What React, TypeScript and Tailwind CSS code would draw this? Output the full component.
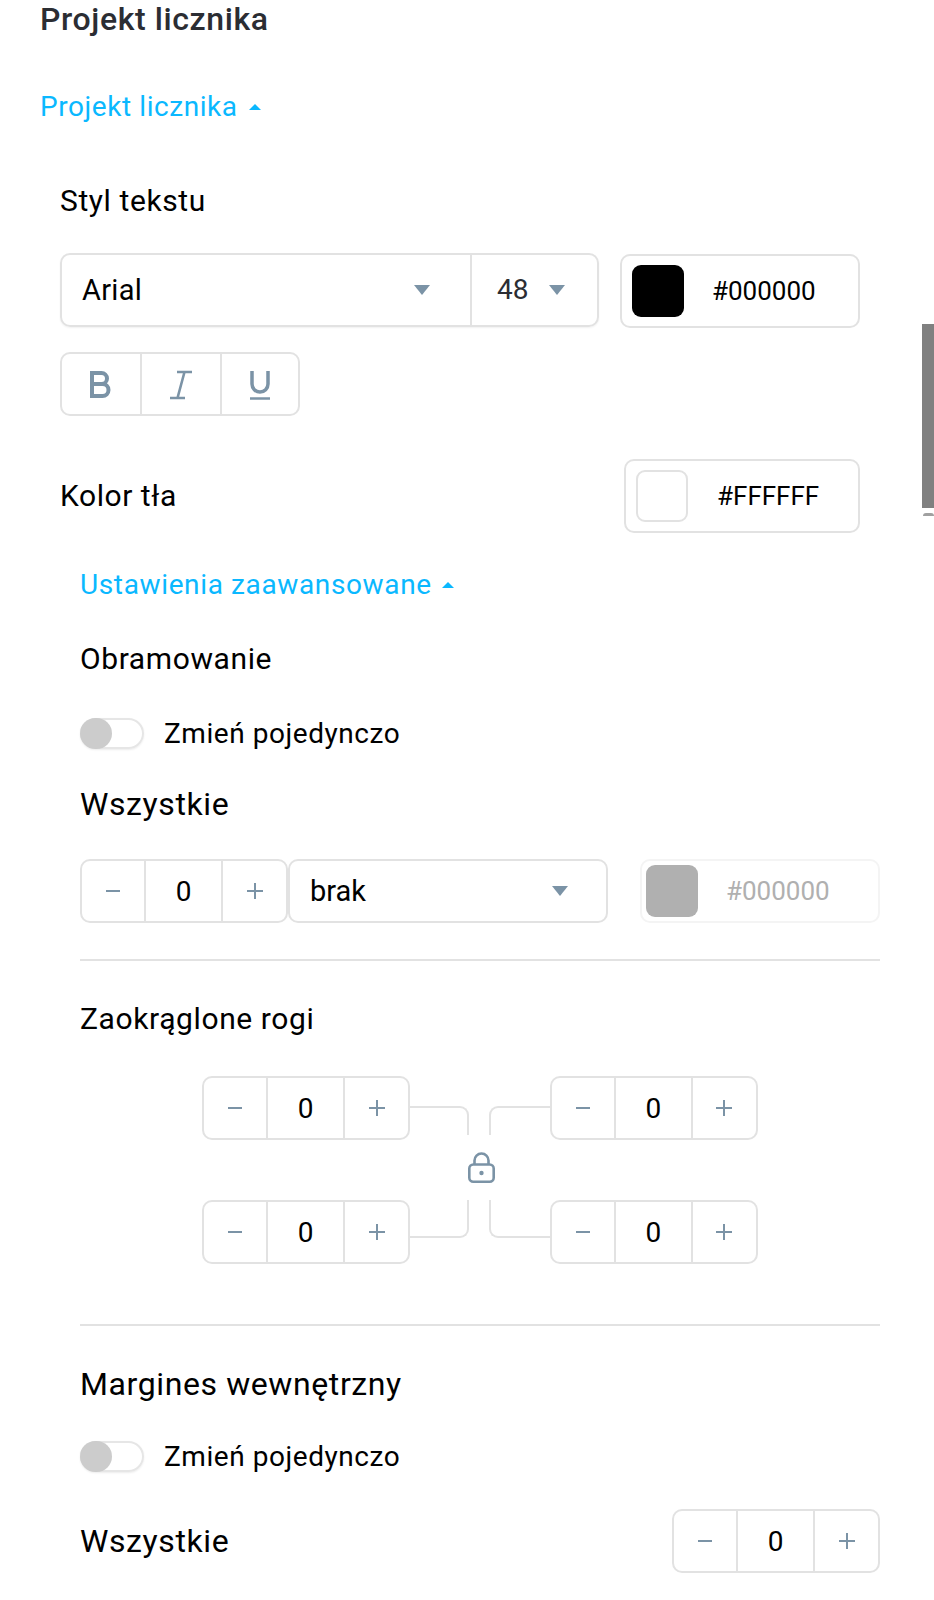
const BORDER = 'border-2 border-[#e2e2e2]';

function Caret({ blue = false }: { blue?: boolean }) {
  if (blue) {
    return (
      <svg width="12" height="6" viewBox="0 0 12 6" className="shrink-0">
        <polygon points="6,0 12,6 0,6" fill="#0ab8ff" />
      </svg>
    );
  }
  return (
    <svg width="16" height="10" viewBox="0 0 16 10" className="shrink-0">
      <polygon points="0,0 16,0 8,10" fill="#7b93a6" />
    </svg>
  );
}

function Stepper() {
  return (
    <div className={`w-[208px] h-[64px] ${BORDER} rounded-[10px] flex items-center shrink-0`}>
      <div className="w-[62px] h-full flex items-center justify-center">
        <svg width="14" height="2" viewBox="0 0 14 2">
          <rect width="14" height="2" fill="#7b93a6" />
        </svg>
      </div>
      <div className="w-[79px] h-full pt-[2px] border-x-2 border-[#e2e2e2] flex items-center justify-center text-[28px] text-black">0</div>
      <div className="flex-1 h-full flex items-center justify-center">
        <svg width="16" height="16" viewBox="0 0 16 16">
          <path d="M0 8h16M8 0v16" stroke="#7b93a6" strokeWidth="2" />
        </svg>
      </div>
    </div>
  );
}

function ColorBox({ hex, swatch, width, gap }: { hex: string; swatch: string; width: string; gap: string }) {
  return (
    <div className={`${width} h-[74px] ${BORDER} rounded-[10px] flex items-center pl-[10px] shrink-0`}>
      <div className={`w-[52px] h-[52px] rounded-[9px] shrink-0 ${swatch}`}></div>
      <span className={`${gap} text-[26px] text-black`}>{hex}</span>
    </div>
  );
}

function Toggle() {
  return (
    <div className="flex items-center h-[31px]">
      <div className="w-[64px] h-[31px] border-2 border-[#e6e6e6] rounded-full shadow-[0_1px_2px_rgba(0,0,0,0.08)]">
        <div className="w-[32px] h-[31px] -mt-[2px] -ml-[2px] rounded-full bg-[#cccccc]"></div>
      </div>
      <span className="ml-[20px] text-[28px] tracking-[0.55px] text-black">Zmień pojedynczo</span>
    </div>
  );
}

function Heading({ children, className = '' }: { children: string; className?: string }) {
  return <div className={`h-[38px] flex items-center tracking-[0.6px] text-black ${className}`}>{children}</div>;
}

export default function App() {
  return (
    <div className="relative w-[934px] h-[1600px] overflow-hidden bg-white font-['Roboto',sans-serif]">
      {/* Scrollbar */}
      <div className="absolute right-0 top-[324px] w-[12px] h-[184px] bg-[#808080]"></div>
      <div className="absolute right-0 top-[513px] w-[11px] h-[3px] rounded-t-full bg-[#a0a0a0]"></div>

      <div className="pl-[40px]">
        <div className="h-[38px] flex items-center text-[32px] font-medium tracking-[0.6px] text-[#2b2d33]">Projekt licznika</div>

        <div className="mt-[50px] h-[38px] flex items-center gap-[11px] text-[28px] tracking-[0.57px] text-[#0ab8ff]">
          Projekt licznika
          <Caret blue />
        </div>

        <div className="pl-[20px]">
          <Heading className="mt-[56px] pb-[2px] text-[30px]">Styl tekstu</Heading>

          {/* Font row */}
          <div className="mt-[33px] w-[800px] flex items-start justify-between">
            <div className={`w-[539px] h-[74px] ${BORDER} rounded-[10px] flex shadow-[0_1px_2px_rgba(0,0,0,0.06)]`}>
              <div className="w-[410px] h-full border-r-2 border-[#e2e2e2] flex items-center justify-between pl-[20px] pr-[40px] text-[29px] tracking-[0.3px] text-black">
                <span className="pt-[2px]">Arial</span>
                <Caret />
              </div>
              <div className="flex-1 h-full flex items-center pl-[25px] gap-[21px] text-[28px] text-[#2b2d33]">
                48
                <Caret />
              </div>
            </div>
            <div className="mt-[1px]">
              <ColorBox hex="#000000" swatch="bg-black" width="w-[240px]" gap="ml-[28px]" />
            </div>
          </div>

          {/* Bold / italic / underline */}
          <div className={`mt-[24px] w-[240px] h-[64px] ${BORDER} rounded-[10px] flex`}>
            <div className="w-[80px] h-full pt-[2px] border-r-2 border-[#e2e2e2] flex items-center justify-center">
              <svg width="24" height="30" viewBox="0 0 24 30" fill="none" stroke="#7b93a6" strokeWidth="4">
                <path d="M3 3h9.5a5.5 5.5 0 0 1 0 11H3zM3 14h10.500a6 6 0 0 1 0 12H3z" />
              </svg>
            </div>
            <div className="w-[80px] h-full pt-[2px] border-r-2 border-[#e2e2e2] flex items-center justify-center">
              <svg width="24" height="30" viewBox="0 0 24 30" fill="none" stroke="#7b93a6" strokeWidth="2.600">
                <path d="M8 2h15M1 28h15M15.500 2 8.500 28" />
              </svg>
            </div>
            <div className="flex-1 h-full pt-[2px] flex items-center justify-center">
              <svg width="22" height="32" viewBox="0 0 22 32" fill="none" stroke="#7b93a6">
                <path d="M3 2v13a8 8 0 0 0 16 0V2" strokeWidth="3.500" />
                <path d="M1 29.500h20" strokeWidth="2.500" />
              </svg>
            </div>
          </div>

          {/* Background colour */}
          <div className="mt-[43px] w-[800px] flex items-center justify-between">
            <div className="pb-[2px] text-[30px] tracking-[0.55px] text-black">Kolor tła</div>
            <ColorBox hex="#FFFFFF" swatch="border-2 border-[#e2e2e2]" width="w-[236px]" gap="ml-[29px]" />
          </div>

          {/* Advanced settings */}
          <div className="pl-[20px] w-[820px]">
            <div className="mt-[33px] h-[38px] flex items-center gap-[10px] text-[28px] tracking-[0.63px] text-[#0ab8ff]">
              Ustawienia zaawansowane
              <Caret blue />
            </div>

            <Heading className="mt-[36px] pb-[2px] text-[30px]">Obramowanie</Heading>
            <div className="mt-[40px]">
              <Toggle />
            </div>
            <Heading className="mt-[36px] text-[32px]">Wszystkie</Heading>

            <div className="mt-[36px] flex items-start">
              <Stepper />
              <div className={`w-[320px] h-[64px] ${BORDER} rounded-[10px] flex items-center justify-between pl-[20px] pr-[38px] text-[29px] text-black`}>
                <span className="pt-[2px]">brak</span>
                <Caret />
              </div>
              <div className="ml-auto w-[240px] h-[64px] border-2 border-[#f4f4f4] rounded-[10px] flex items-center pl-[4px]">
                <div className="w-[52px] h-[52px] rounded-[9px] bg-[#b0b0b0]"></div>
                <span className="ml-[28px] text-[26px] text-[#b0b0b0]">#000000</span>
              </div>
            </div>

            <div className="mt-[36px] h-[2px] bg-[#e2e2e2]"></div>

            <Heading className="mt-[39px] pb-[2px] text-[30px]">Zaokrąglone rogi</Heading>

            {/* Corner radius */}
            <div className="mt-[38px] pl-[122px] w-[678px]">
              <div className="flex items-start">
                <Stepper />
                <div className="mt-[30px] w-[60px] h-[29px] border-t-2 border-r-2 border-[#e2e2e2] rounded-tr-[9px]"></div>
                <div className="w-[20px]"></div>
                <div className="mt-[30px] w-[62px] h-[29px] border-t-2 border-l-2 border-[#e2e2e2] rounded-tl-[9px]"></div>
                <Stepper />
              </div>
              <div className="h-[60px] flex items-center justify-center pb-[5px] pl-[2px]">
                <svg width="27" height="31" viewBox="0 0 27 31" fill="none" stroke="#7b93a6" strokeWidth="2.600">
                  <rect x="1.300" y="12.500" width="24.400" height="17.200" rx="4" />
                  <path d="M6.500 12.500V8.500a7 7 0 0 1 14 0v4" />
                  <circle cx="13.500" cy="21" r="2.200" fill="#7b93a6" stroke="none" />
                </svg>
              </div>
              <div className="flex items-start">
                <Stepper />
                <div className="w-[60px] h-[38px] border-b-2 border-r-2 border-[#e2e2e2] rounded-br-[9px]"></div>
                <div className="w-[20px]"></div>
                <div className="w-[62px] h-[38px] border-b-2 border-l-2 border-[#e2e2e2] rounded-bl-[9px]"></div>
                <Stepper />
              </div>
            </div>

            <div className="mt-[60px] h-[2px] bg-[#e2e2e2]"></div>

            <Heading className="mt-[39px] text-[32px]">Margines wewnętrzny</Heading>
            <div className="mt-[38px]">
              <Toggle />
            </div>

            <div className="mt-[37px] flex items-center justify-between">
              <div className="text-[32px] tracking-[0.6px] text-black">Wszystkie</div>
              <Stepper />
            </div>
          </div>
        </div>
      </div>
    </div>
  );
}
